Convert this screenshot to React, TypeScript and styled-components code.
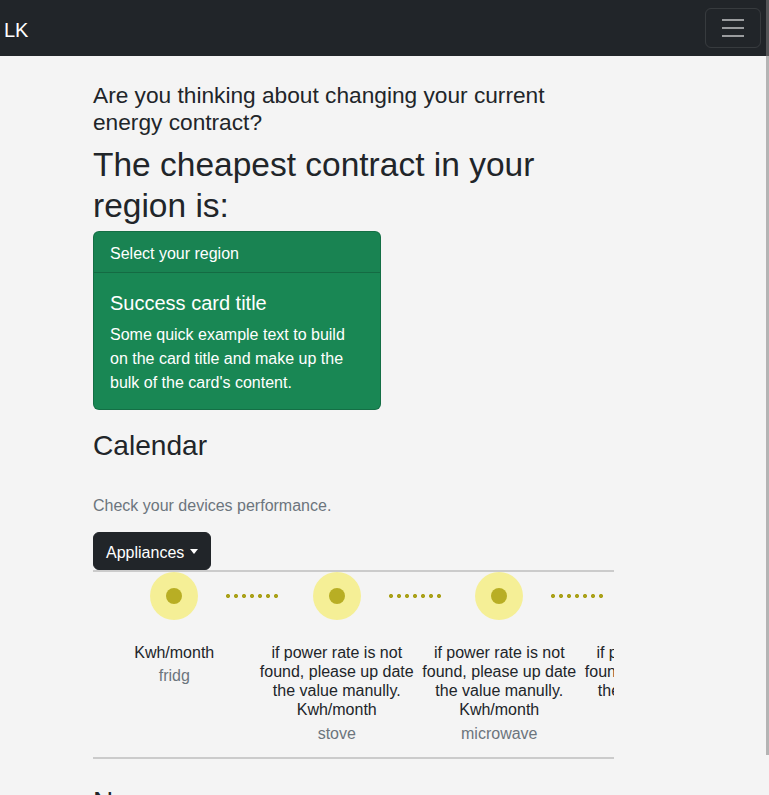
import React from "react";
import styled, { createGlobalStyle } from "styled-components";

const FONT = `"Liberation Sans", Arial, sans-serif`;

const GlobalStyle = createGlobalStyle`
  * { box-sizing: border-box; }
  html { overflow: hidden; }
  html, body { margin: 0; padding: 0; }
  body {
    background: #f4f4f4;
    color: #212529;
    font-family: ${FONT};
    font-size: 16px;
    line-height: 1.5;
  }
`;

const Navbar = styled.nav`
  display: flex;
  align-items: center;
  justify-content: space-between;
  height: 56px;
  padding: 8px 8px 8px 4px;
  background: #212529;
`;

const Brand = styled.a`
  color: #fff;
  font-size: 20px;
  line-height: 30px;
  padding: 7px 0 3px;
  text-decoration: none;
`;

const Toggler = styled.button`
  display: flex;
  align-items: center;
  justify-content: center;
  width: 56px;
  height: 40px;
  padding: 4px 12px;
  background: transparent;
  border: 1px solid rgba(255, 255, 255, 0.1);
  border-radius: 6px;
`;

const ScrollThumb = styled.div`
  position: fixed;
  top: 0;
  right: 0;
  width: 3px;
  height: 755px;
  background: rgba(128, 128, 128, 0.55);
`;

const Main = styled.main`
  width: 614px;
  padding: 26px 0 0 93px;
`;

const Question = styled.h4`
  margin: 0 0 9px;
  font-size: 22.7px;
  font-weight: 400;
  line-height: 1.2;
`;

const Headline = styled.h1`
  margin: 0 0 5px;
  font-size: 33.5px;
  font-weight: 400;
  line-height: 1.2;
`;

const Card = styled.div`
  width: 288px;
  background: #198754;
  color: #fff;
  border: 1px solid rgba(0, 0, 0, 0.175);
  border-radius: 6px;
  overflow: hidden;
`;

const CardHeader = styled.div`
  padding: 10px 16px 6px;
  background: rgba(33, 37, 41, 0.03);
  border-bottom: 1px solid rgba(0, 0, 0, 0.175);
`;

const CardBody = styled.div`
  padding: 18px 16px 14px;
`;

const CardTitle = styled.h5`
  margin: 0 0 8px;
  font-size: 20px;
  font-weight: 400;
  line-height: 1.2;
`;

const CardText = styled.p`
  margin: 0;
`;

const SectionTitle = styled.h2<{ $top: number; $bottom: number }>`
  margin: ${(p) => p.$top}px 0 ${(p) => p.$bottom}px;
  font-size: 28.1px;
  font-weight: 400;
  line-height: 1.2;
`;

const Lead = styled.p`
  margin: 0 0 14px;
  color: #6c757d;
`;

const Toolbar = styled.div`
  display: flex;
`;

const DropdownButton = styled.button`
  display: flex;
  align-items: center;
  height: 38px;
  padding: 8px 12px 4px;
  background: #212529;
  color: #fff;
  border: 1px solid #212529;
  border-radius: 6px;
  font-family: ${FONT};
  font-size: 16px;
  line-height: 24px;
`;

const Caret = styled.span`
  display: inline-block;
  margin: -2px 0 0 6px;
  width: 0;
  height: 0;
  border-top: 5px solid #fff;
  border-left: 4.5px solid transparent;
  border-right: 4.5px solid transparent;
`;

const Divider = styled.hr`
  width: 521px;
  height: 2px;
  margin: 0;
  border: 0;
  background: #cbcbcb;
`;

const Timeline = styled.div`
  display: flex;
  width: 521px;
  overflow: hidden;
  padding-bottom: 14px;
`;

const Step = styled.div`
  position: relative;
  flex: 0 0 162.5px;
  display: flex;
  flex-direction: column;
  align-items: center;
  text-align: center;
`;

const Marker = styled.div`
  display: flex;
  align-items: center;
  justify-content: center;
  width: 48px;
  height: 48px;
  border-radius: 50%;
  background: #f5ef96;
`;

const MarkerDot = styled.div`
  width: 16px;
  height: 16px;
  border-radius: 50%;
  background: #b8ae24;
`;

const Connector = styled.div`
  position: absolute;
  top: 22px;
  left: 131px;
  width: 56px;
  height: 4px;
  background: radial-gradient(circle at center, #aaa11a 1.8px, transparent 2.3px) 0 0 / 8px 4px repeat-x;
`;

const StepText = styled.div`
  margin-top: 23px;
  line-height: 1.2;
  color: #212529;
`;

const StepLabel = styled.div`
  margin-top: 4.5px;
  line-height: 1.2;
  color: #6c757d;
`;

const WARNING = "if power rate is not found, please up date the value manully. Kwh/month";

const steps = [
  { text: "Kwh/month", label: "fridg" },
  { text: WARNING, label: "stove" },
  { text: WARNING, label: "microwave" },
  { text: WARNING, label: "oven" },
];

export default function App() {
  return (
    <>
      <GlobalStyle />
      <Navbar>
        <Brand href="#">LK</Brand>
        <Toggler aria-label="Toggle navigation">
          <svg width="30" height="30" viewBox="0 0 30 30">
            <path
              d="M4 7h22M4 15h22M4 23h22"
              stroke="rgba(255,255,255,0.55)"
              strokeWidth="2"
              strokeLinecap="butt"
            />
          </svg>
        </Toggler>
      </Navbar>
      <ScrollThumb />
      <Main>
        <Question>Are you thinking about changing your current energy contract?</Question>
        <Headline>The cheapest contract in your region is:</Headline>
        <Card>
          <CardHeader>Select your region</CardHeader>
          <CardBody>
            <CardTitle>Success card title</CardTitle>
            <CardText>
              Some quick example text to build on the card title and make up the bulk of the
              card's content.
            </CardText>
          </CardBody>
        </Card>
        <SectionTitle $top={19} $bottom={31}>Calendar</SectionTitle>
        <Lead>Check your devices performance.</Lead>
        <Toolbar>
          <DropdownButton>
            Appliances
            <Caret />
          </DropdownButton>
        </Toolbar>
        <Divider />
        <Timeline>
          {steps.map((s, i) => (
            <Step key={i}>
              <Marker>
                <MarkerDot />
              </Marker>
              <Connector />
              <StepText>{s.text}</StepText>
              <StepLabel>{s.label}</StepLabel>
            </Step>
          ))}
        </Timeline>
        <Divider />
        <SectionTitle $top={26} $bottom={8}>News</SectionTitle>
      </Main>
    </>
  );
}
